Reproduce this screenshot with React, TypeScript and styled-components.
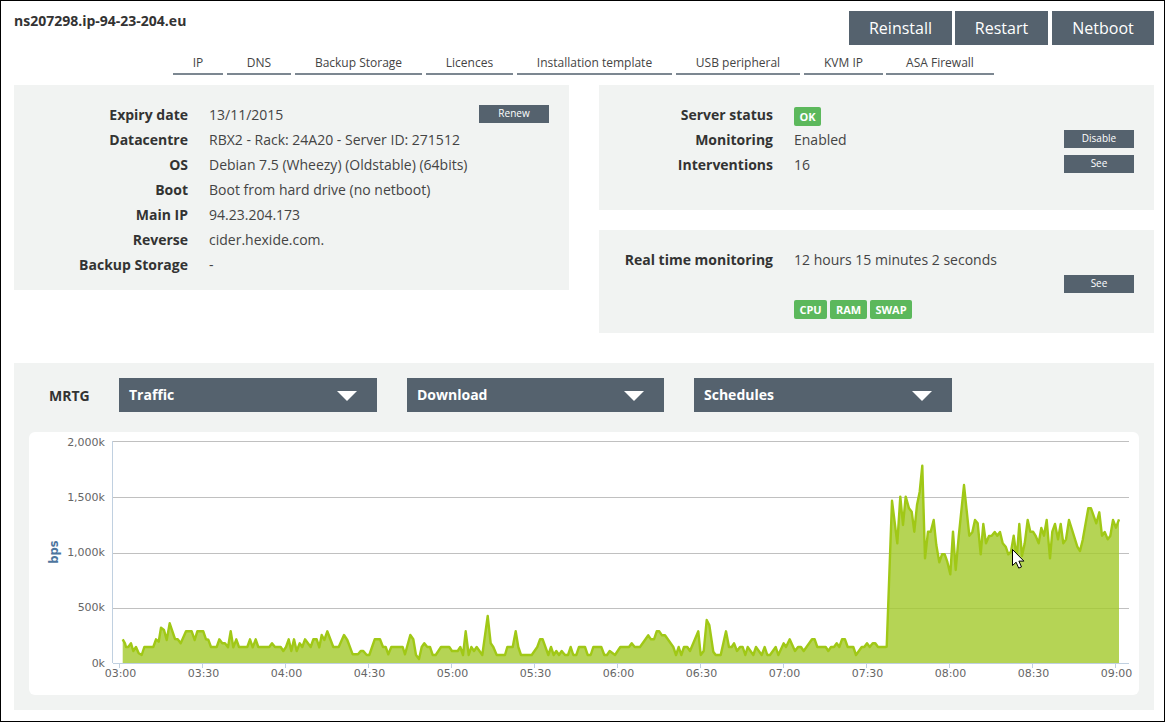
import React from 'react';
import styled, { createGlobalStyle } from 'styled-components';

const GlobalStyle = createGlobalStyle`
  html, body {
    margin: 0;
    padding: 0;
    background: #ffffff;
  }
  body {
    font-family: "Open Sans", "Liberation Sans", sans-serif;
    color: #444444;
  }
`;

const Frame = styled.div`
  box-sizing: border-box;
  width: 1165px;
  height: 722px;
  border: 1px solid #000000;
  padding: 10px 10px 0 13px;
  overflow: hidden;
`;

const Header = styled.header`
  display: flex;
  justify-content: space-between;
  align-items: flex-start;
`;

const ServerName = styled.h1`
  margin: 0;
  font-size: 14px;
  line-height: 20px;
  font-weight: 700;
  color: #333333;
`;

const Actions = styled.div`
  display: flex;
  gap: 3px;
`;

const ActionButton = styled.button<{ $width: number }>`
  width: ${(p) => p.$width}px;
  height: 34px;
  padding: 0;
  border: 0;
  background: #55626e;
  color: #ffffff;
  font-family: inherit;
  font-size: 16px;

  &:last-child {
    margin-left: 1px;
  }
`;

const Tabs = styled.nav`
  display: flex;
  gap: 4px;
  height: 20px;
  margin: 10px 0 10px 159px;
`;

const Tab = styled.a<{ $width: number }>`
  box-sizing: border-box;
  width: ${(p) => p.$width}px;
  height: 20px;
  border-bottom: 2px solid #7c8791;
  font-size: 12px;
  line-height: 16px;
  text-align: center;
  color: #444444;

  &:last-child {
    margin-left: -1px;
  }
`;

const Columns = styled.div`
  display: grid;
  grid-template-columns: 555px 555px;
  column-gap: 30px;
  align-items: start;
`;

const Stack = styled.div`
  display: flex;
  flex-direction: column;
  gap: 20px;
`;

const Panel = styled.section<{ $bottom: number }>`
  padding: 17px 20px ${(p) => p.$bottom}px 0;
  background: #f1f3f2;
`;

const InfoGrid = styled.dl`
  display: grid;
  grid-template-columns: 174px 1fr 70px;
  grid-auto-rows: 25px;
  margin: 0;
  font-size: 14px;
  line-height: 25px;
`;

const Label = styled.dt`
  grid-column: 1;
  font-weight: 700;
  text-align: right;
  color: #333333;
`;

const Value = styled.dd<{ $row?: number }>`
  grid-column: 2;
  grid-row: ${(p) => p.$row ?? 'auto'};
  margin: 0 0 0 21px;
  color: #444444;
`;

const SmallButton = styled.button<{ $row?: number }>`
  grid-column: 3;
  grid-row: ${(p) => p.$row ?? 'auto'};
  align-self: start;
  width: 70px;
  height: 18px;
  margin-top: 3px;
  padding: 0 0 2px;
  border: 0;
  background: #55626e;
  color: #ffffff;
  font-family: inherit;
  font-size: 10px;
  line-height: 14px;
`;

const Badges = styled.div<{ $top: number }>`
  display: flex;
  gap: 3px;
  align-items: flex-start;
  height: 25px;
  padding-top: ${(p) => p.$top}px;
  box-sizing: border-box;
`;

const Badge = styled.span<{ $width: number }>`
  box-sizing: border-box;
  width: ${(p) => p.$width}px;
  height: 19px;
  border-radius: 2px;
  background: #5cb85c;
  color: #ffffff;
  font-size: 11px;
  font-weight: 700;
  line-height: 19px;
  text-align: center;
`;

const MrtgPanel = styled.section`
  margin-top: 30px;
  padding: 15px;
  background: #f1f3f2;
`;

const MrtgBar = styled.div`
  display: flex;
  align-items: center;
  gap: 30px;
  height: 34px;
  margin-bottom: 20px;
`;

const MrtgTitle = styled.span`
  width: 45px;
  margin-left: 20px;
  margin-right: -5px;
  font-size: 14px;
  font-weight: 700;
  color: #333333;
`;

const Select = styled.div<{ $width: number }>`
  box-sizing: border-box;
  display: flex;
  align-items: center;
  justify-content: space-between;
  width: ${(p) => p.$width}px;
  height: 34px;
  padding: 0 20px 2px 10px;
  background: #55626e;
  color: #ffffff;
  font-size: 14px;
  font-weight: 700;
`;

const Caret = styled.i`
  width: 0;
  height: 0;
  margin-top: 4px;
  border-left: 10px solid transparent;
  border-right: 10px solid transparent;
  border-top: 10px solid #ffffff;
`;

const ChartCard = styled.div`
  height: 263px;
  border-radius: 6px;
  background: #ffffff;
`;

const ChartSvg = styled.svg`
  display: block;
  width: 1110px;
  height: 263px;
`;

const AxisText = styled.text`
  font-family: "DejaVu Sans", Verdana, sans-serif;
  font-size: 11px;
  fill: #666666;
`;

const AxisTitle = styled.text`
  font-family: "DejaVu Sans", Verdana, sans-serif;
  font-size: 11.5px;
  font-weight: 700;
  fill: #4d759e;
`;

// traced from the graph, [x, y] in three times page scale per stretch
const stretchA = [
  [68,148],[75,160],[78,171],[85,171],[93,160],[100,183],[108,171],[116,190],[125,195],[133,171],[160,171],[168,148],[176,155],[183,113],[192,120],[200,150],[209,100],[225,147],[233,148],[242,160],[258,124],[275,124],[284,150],[292,124],[310,124],[318,148],[325,149],[333,171],[350,171],[358,148],[367,160],[375,160],[384,172],[392,124],[400,172],[409,148],[417,171],[442,171],[450,148],[458,172],[467,148],[475,171],[508,171],[516,160],[525,171],[542,171],[550,183],[558,171],[566,148],[574,183],[582,148],[590,183],[599,160],[607,171],[615,148],[632,171],[640,148],[650,148],[658,172],[665,135],[673,150],[682,124],[700,171],[716,171],[732,135],[742,150],[758,193],[774,193],[782,183],[790,183],[800,195],[808,195],[824,148],[840,148],[849,171],[857,171],[865,193],[874,171],[908,171],[915,193],[931,135],[940,148],[948,195],[957,207],[965,171],[973,160],[982,171],[990,171],[998,195],[1007,195],[1023,171],[1048,171],[1056,183],[1073,183],[1081,171],[1089,195],[1097,124],[1106,195],[1114,171],[1122,183],[1130,171],[1147,195],[1163,78],[1172,160],[1180,171],[1190,195],[1200,195],
];

const stretchB = [
  [75,195],[82,171],[98,171],[107,124],[115,171],[123,195],[155,195],[172,171],[180,148],[188,148],[205,195],[213,171],[221,195],[229,183],[237,195],[245,183],[255,195],[264,195],[272,171],[280,195],[289,195],[297,171],[315,171],[323,195],[332,195],[340,171],[364,171],[373,195],[381,195],[389,183],[405,195],[421,171],[447,171],[455,160],[464,171],[480,171],[505,136],[513,148],[522,148],[530,124],[538,124],[546,136],[555,136],[580,171],[588,195],[596,171],[604,195],[612,171],[622,171],[630,183],[655,124],[662,195],[671,183],[680,90],[688,105],[700,185],[707,195],[722,195],[738,124],[747,171],[755,171],[762,160],[771,183],[780,171],[788,171],[796,195],[803,171],[820,195],[828,171],[845,195],[854,171],[862,195],[870,195],[887,171],[895,195],[911,160],[918,171],[929,148],[945,183],[954,171],[963,171],[971,183],[996,148],[1004,148],[1012,171],[1037,171],[1045,183],[1053,171],[1062,171],[1070,160],[1078,171],[1086,148],[1095,148],[1103,171],[1120,171],[1128,195],[1145,171],[1153,171],[1161,160],[1169,171],[1178,160],[1186,160],[1194,171],[1218,171],
];

const stretchC = [
  [80,650],[96,212],[112,340],[121,200],[129,285],[137,200],[147,235],[155,245],[163,305],[171,225],[179,185],[187,107],[195,385],[204,305],[212,305],[221,270],[229,345],[238,397],[246,373],[254,373],[262,395],[271,433],[279,305],[287,420],[296,320],[312,165],[328,317],[337,307],[345,270],[353,280],[362,373],[370,282],[378,340],[387,318],[395,317],[404,306],[412,317],[420,306],[428,340],[437,350],[445,373],[453,365],[461,317],[470,385],[478,282],[486,378],[494,340],[503,270],[511,305],[519,305],[527,318],[536,340],[544,294],[552,317],[560,270],[570,385],[577,305],[585,282],[594,328],[602,282],[610,340],[618,328],[627,270],[652,350],[660,363],[668,330],[685,235],[693,235],[709,280],[718,247],[726,317],[734,306],[743,328],[751,318],[759,270],[768,293],[777,268],
];

const toPage = (pts: number[][], left: number, top: number) =>
  pts.map(([x, y]) => `${(left + x / 3).toFixed(1)},${(top + y / 3).toFixed(1)}`);

const linePoints = [
  ...toPage(stretchA, 100, 590),
  ...toPage(stretchB, 480, 590),
  ...toPage(stretchC, 860, 430),
];
const trafficLine = linePoints.join(' ');
const trafficArea = `${linePoints[0].split(',')[0]},663 ${trafficLine} 1119,663`;

const gridLines = [
  { y: 441.5, label: '2,000k', base: 446 },
  { y: 497.5, label: '1,500k', base: 501 },
  { y: 553.5, label: '1,000k', base: 556 },
  { y: 608.5, label: '500k', base: 611 },
];

const times = ['03:00', '03:30', '04:00', '04:30', '05:00', '05:30', '06:00', '06:30', '07:00', '07:30', '08:00', '08:30', '09:00'];

const TrafficChart = () => (
  <ChartSvg viewBox="29 432 1110 263">
    {gridLines.map((g) => (
      <g key={g.label}>
        <line x1="113" x2="1129" y1={g.y} y2={g.y} stroke="#c0c0c0" />
        <AxisText x="105" y={g.base} textAnchor="end">{g.label}</AxisText>
      </g>
    ))}
    <AxisText x="105" y="667" textAnchor="end">0k</AxisText>
    <polygon points={trafficArea} fill="#a3c92a" fillOpacity="0.8" />
    <polyline points={trafficLine} fill="none" stroke="#a0c816" strokeWidth="2.4" strokeLinejoin="round" />
    <line x1="112.5" x2="112.5" y1="441" y2="663" stroke="#c0d0e0" />
    <line x1="113" x2="1129" y1="663.5" y2="663.5" stroke="#c0d0e0" />
    {times.map((t, i) => (
      <g key={t}>
        <line x1={119.5 + i * 83} x2={119.5 + i * 83} y1="663" y2="668" stroke="#c0d0e0" />
        <AxisText x={120.5 + i * 83} y="677" textAnchor="middle">{t}</AxisText>
      </g>
    ))}
    <AxisTitle transform="translate(57.5 552) rotate(-90)" textAnchor="middle">bps</AxisTitle>
    <path
      d="M1012.5 549.5v16l3.6-3.3 2.6 5.9 2.8-1.2-2.6-5.8h5z"
      fill="#ffffff"
      stroke="#000000"
      strokeWidth="1"
      strokeLinejoin="round"
    />
  </ChartSvg>
);

const tabs = [
  { name: 'IP', width: 50 },
  { name: 'DNS', width: 64 },
  { name: 'Backup Storage', width: 127 },
  { name: 'Licences', width: 87 },
  { name: 'Installation template', width: 155 },
  { name: 'USB peripheral', width: 124 },
  { name: 'KVM IP', width: 79 },
  { name: 'ASA Firewall', width: 108 },
];

const App: React.FC = () => {
  return (
    <Frame>
      <GlobalStyle />
      <Header>
        <ServerName>ns207298.ip-94-23-204.eu</ServerName>
        <Actions>
          <ActionButton $width={103}>Reinstall</ActionButton>
          <ActionButton $width={93}>Restart</ActionButton>
          <ActionButton $width={102}>Netboot</ActionButton>
        </Actions>
      </Header>
      <Tabs>
        {tabs.map((t) => (
          <Tab key={t.name} $width={t.width}>{t.name}</Tab>
        ))}
      </Tabs>
      <Columns>
        <Panel $bottom={13}>
          <InfoGrid>
            <Label>Expiry date</Label>
            <Value>13/11/2015</Value>
            <SmallButton>Renew</SmallButton>
            <Label>Datacentre</Label>
            <Value>RBX2 - Rack: 24A20 - Server ID: 271512</Value>
            <Label>OS</Label>
            <Value>Debian 7.5 (Wheezy) (Oldstable) (64bits)</Value>
            <Label>Boot</Label>
            <Value>Boot from hard drive (no netboot)</Value>
            <Label>Main IP</Label>
            <Value>94.23.204.173</Value>
            <Label>Reverse</Label>
            <Value>cider.hexide.com.</Value>
            <Label>Backup Storage</Label>
            <Value>-</Value>
          </InfoGrid>
        </Panel>
        <Stack>
          <Panel $bottom={33}>
            <InfoGrid>
              <Label>Server status</Label>
              <Value>
                <Badges $top={5}>
                  <Badge $width={27}>OK</Badge>
                </Badges>
              </Value>
              <Label>Monitoring</Label>
              <Value>Enabled</Value>
              <SmallButton>Disable</SmallButton>
              <Label>Interventions</Label>
              <Value>16</Value>
              <SmallButton>See</SmallButton>
            </InfoGrid>
          </Panel>
          <Panel $bottom={11}>
            <InfoGrid>
              <Label>Real time monitoring</Label>
              <Value>12 hours 15 minutes 2 seconds</Value>
              <SmallButton $row={2}>See</SmallButton>
              <Value $row={3}>
                <Badges $top={3}>
                  <Badge $width={33}>CPU</Badge>
                  <Badge $width={37}>RAM</Badge>
                  <Badge $width={42}>SWAP</Badge>
                </Badges>
              </Value>
            </InfoGrid>
          </Panel>
        </Stack>
      </Columns>
      <MrtgPanel>
        <MrtgBar>
          <MrtgTitle>MRTG</MrtgTitle>
          <Select $width={258}>Traffic<Caret /></Select>
          <Select $width={257}>Download<Caret /></Select>
          <Select $width={258}>Schedules<Caret /></Select>
        </MrtgBar>
        <ChartCard>
          <TrafficChart />
        </ChartCard>
      </MrtgPanel>
    </Frame>
  );
};

export default App;
